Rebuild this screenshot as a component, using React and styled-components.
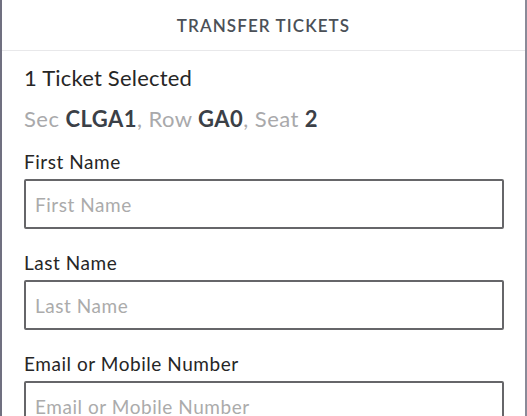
import React from "react";
import styled, { createGlobalStyle } from "styled-components";

const Global = createGlobalStyle`
  html, body { margin: 0; padding: 0; background: #fff; }
  body { font-family: Lato, "Open Sans", sans-serif; }
  * { box-sizing: border-box; }
`;

const Frame = styled.div`
  width: 527px;
  height: 416px;
  overflow: hidden;
  border-left: 2px solid #707080;
  border-right: 2px solid #8a8a98;
  background: #fff;
`;

const Header = styled.header`
  height: 51px;
  display: flex;
  align-items: center;
  justify-content: center;
  border-bottom: 1px solid #e8e8ea;
  font-size: 17px;
  font-weight: 600;
  letter-spacing: 1.1px;
  color: #4b5057;
  text-transform: uppercase;
`;

const Body = styled.div`
  padding: 14px 21px 0 22px;
  display: flex;
  flex-direction: column;
`;

const Title = styled.div`
  font-size: 22px;
  line-height: 26px;
  letter-spacing: 0.2px;
  color: #262626;
`;

const Seat = styled.div`
  margin-top: 15px;
  font-size: 22px;
  line-height: 26px;
  letter-spacing: 0.45px;
  color: #a9a9ab;
`;

const Strong = styled.b`
  font-weight: 700;
  color: #3b4047;
`;

const Field = styled.div`
  margin-top: ${(p) => (p.$first ? 18 : 22)}px;
  display: flex;
  flex-direction: column;
  gap: 5px;
`;

const Label = styled.label`
  font-size: 19px;
  line-height: 24px;
  letter-spacing: 0.55px;
  color: #262626;
`;

const Input = styled.input`
  height: 50px;
  width: 100%;
  border: 2px solid #666669;
  border-radius: 2px;
  padding: 0 9px;
  font-family: inherit;
  font-size: 19px;
  letter-spacing: 0.55px;
  color: #262626;
  outline: none;
  &::placeholder { color: #ababab; }
`;

export default function App() {
  const fields = ["First Name", "Last Name", "Email or Mobile Number"];
  return (
    <>
      <Global />
      <Frame>
        <Header>Transfer Tickets</Header>
        <Body>
          <Title>1 Ticket Selected</Title>
          <Seat>
            Sec <Strong>CLGA1</Strong>, Row <Strong>GA0</Strong>, Seat <Strong>2</Strong>
          </Seat>
          {fields.map((f, i) => (
            <Field key={f} $first={i === 0}>
              <Label>{f}</Label>
              <Input placeholder={f} />
            </Field>
          ))}
        </Body>
      </Frame>
    </>
  );
}
